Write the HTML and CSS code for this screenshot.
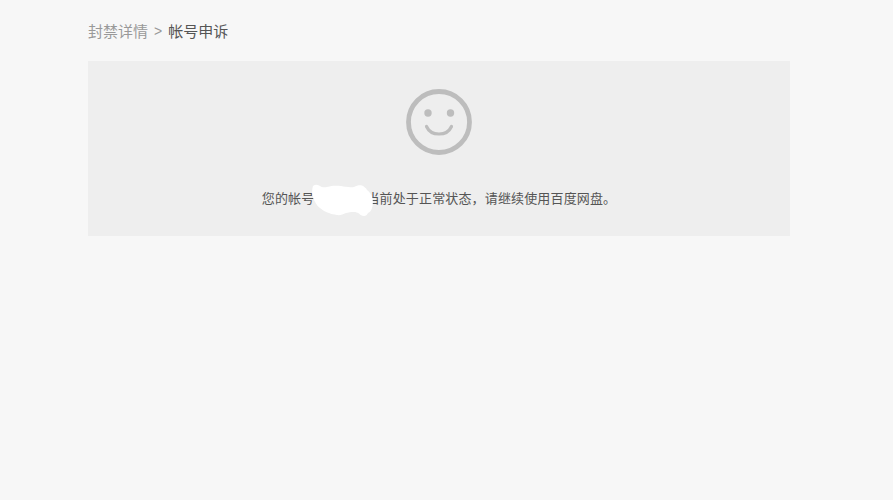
FILE: index.html
```html
<!DOCTYPE html>
<html>

<head>
    <title>帐号申诉</title>
    <meta name="viewport" content="width=device-width, initial-scale=1" charset="UTF-8">
    <link rel="stylesheet" href="styles.css">
</head>

<body>
    <div class="crumbs">
        <span class="crumb-link">封禁详情</span>
        <span class="crumb-sep">&gt;</span>
        <span class="crumb-now">帐号申诉</span>
    </div>

    <div class="panel">
        <svg class="smile" width="66" height="66" viewBox="0 0 66 66">
            <circle cx="33" cy="33" r="30.5" fill="none" stroke="#bdbdbd" stroke-width="4.8"></circle>
            <circle cx="22" cy="24" r="3.7" fill="#bdbdbd"></circle>
            <circle cx="44.5" cy="24" r="3.7" fill="#bdbdbd"></circle>
            <path d="M20.5 37.5 C25 47.5 41 47.5 45.5 37.5" fill="none" stroke="#bdbdbd" stroke-width="3.2" stroke-linecap="round"></path>
        </svg>
        <p class="message">您的帐号<span class="account"><svg class="blot" width="62" height="34" viewBox="0 0 62 34"><path d="M1 2 C3 0.5 5 0.5 7 1.5 C10 3.5 12 3.5 15 3 C20 1.5 24 1.5 29 2 C33 3 38 3.5 42 3 C45 1.5 47 1 50 1.5 C52 2.5 54 4 55 6 C58 8 60 11 60.5 14 C61 18 61 21 60 24 C59 27 58 28 56 29 C55 31 54 32 52 32 C50 32 48 31 47 29.5 C45 28.5 44 28 42 28 C39 28 36 28.5 34 29 C31 30.5 28 31.5 25 31 C22 30.5 19 30 17 29 C14 28 11 26.5 8.7 24.5 C6 23 5 21 3.7 19 C2 16 1 14 0.5 11 C0 8 0 5 1 2 Z" fill="#ffffff"></path></svg></span>当前处于正常状态，请继续使用百度网盘。</p>
    </div>
</body>

</html>
```

FILE: styles.css
```css
html,
body {
    margin: 0;
    padding: 0;
}

body {
    background-color: #f7f7f7;
    font-family: "Noto Sans CJK SC", "Liberation Sans", sans-serif;
    min-height: 500px;
}

.crumbs {
    display: flex;
    align-items: center;
    gap: 6px;
    height: 61px;
    padding-left: 88px;
    box-sizing: border-box;
    font-size: 15px;
    line-height: 20px;
}

.crumb-link {
    color: #999999;
}

.crumb-sep {
    color: #999999;
    font-size: 14px;
    font-family: "Liberation Sans", sans-serif;
}

.crumb-now {
    color: #555555;
}

.panel {
    display: flex;
    flex-direction: column;
    align-items: center;
    width: 702px;
    height: 175px;
    margin-left: 88px;
    padding-top: 28px;
    box-sizing: border-box;
    background-color: #eeeeee;
}

.smile {
    display: block;
}

.message {
    margin: 33px 0 0;
    font-size: 13px;
    letter-spacing: 0.15px;
    line-height: 20px;
    color: #555555;
    white-space: nowrap;
}

.account {
    display: inline-block;
    position: relative;
    width: 52px;
    height: 20px;
    vertical-align: top;
}

.blot {
    position: absolute;
    left: -2px;
    top: -4px;
}
```
